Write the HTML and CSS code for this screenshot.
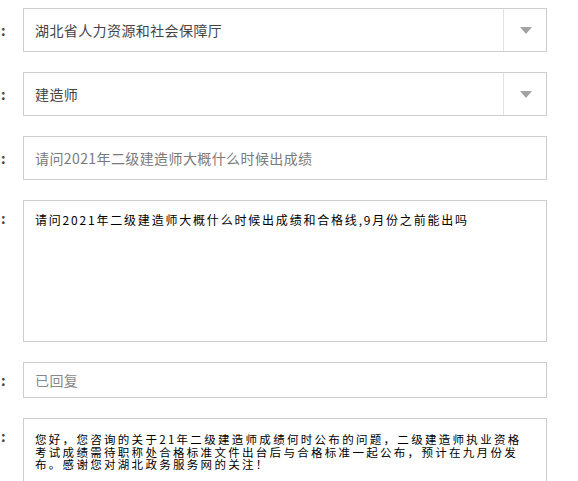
FILE: index.html
```html
<!DOCTYPE html>
<html lang="zh-CN">
<head>
<meta charset="utf-8">
<title>留言详情</title>
<link rel="stylesheet" href="styles.css">
</head>
<body>
<div class="form">
  <div class="row">
    <div class="label label-mid">:</div>
    <div class="field select">
      <div class="select-text">湖北省人力资源和社会保障厅</div>
      <div class="select-btn"><span class="arrow"></span></div>
    </div>
  </div>
  <div class="row">
    <div class="label label-mid">:</div>
    <div class="field select">
      <div class="select-text">建造师</div>
      <div class="select-btn"><span class="arrow"></span></div>
    </div>
  </div>
  <div class="row">
    <div class="label label-mid">:</div>
    <div class="field input">请问2021年二级建造师大概什么时候出成绩</div>
  </div>
  <div class="row">
    <div class="label label-top">:</div>
    <div class="field area area-tall">请问2021年二级建造师大概什么时候出成绩和合格线,9月份之前能出吗</div>
  </div>
  <div class="row">
    <div class="label label-short">:</div>
    <div class="field input input-short">已回复</div>
  </div>
  <div class="row">
    <div class="label label-top">:</div>
    <div class="field area area-reply">您好，您咨询的关于21年二级建造师成绩何时公布的问题，二级建造师执业资格考试成绩需待职称处合格标准文件出台后与合格标准一起公布，预计在九月份发布。感谢您对湖北政务服务网的关注！</div>
  </div>
</div>
</body>
</html>
```
FILE: styles.css
```css
html, body {
  margin: 0;
  padding: 0;
  background: #ffffff;
}
body {
  font-family: "Noto Sans CJK SC", "Noto Sans", sans-serif;
  overflow: hidden;
  height: 481px;
}
.form {
  display: flex;
  flex-direction: column;
  gap: 20px;
  padding-top: 8px;
}
.row {
  display: flex;
  align-items: flex-start;
}
.label {
  width: 23px;
  box-sizing: border-box;
  padding-left: 1px;
  font-size: 14px;
  color: #444;
  font-weight: bold;
}
.label-mid {
  line-height: 44px;
}
.label-short {
  line-height: 36px;
}
.label-top {
  padding-top: 11px;
  line-height: 14px;
}
.field {
  width: 524px;
  box-sizing: border-box;
  border: 1px solid #cdcdcd;
  background: #fff;
}
.select {
  height: 44px;
  display: flex;
}
.select-text {
  flex: 1;
  padding-left: 11px;
  line-height: 42px;
  font-size: 14px;
  letter-spacing: 0.4px;
  color: #444;
}
.select-btn {
  width: 42px;
  border-left: 1px solid #e2e2e2;
  display: flex;
  align-items: center;
  justify-content: center;
}
.arrow {
  width: 0;
  height: 0;
  border-left: 6px solid transparent;
  border-right: 6px solid transparent;
  border-top: 7px solid #a3a3a3;
  margin-left: 2px;
}
.input {
  height: 44px;
  padding-left: 11px;
  line-height: 42px;
  font-size: 14px;
  letter-spacing: 0.4px;
  color: #7a7a7a;
}
.input-short {
  height: 36px;
  line-height: 34px;
  color: #888;
}
.area {
  padding: 12px 21px 0 11px;
  font-size: 11.5px;
  line-height: 12.5px;
  letter-spacing: 2.3px;
  color: #000;
}
.area-tall {
  height: 142px;
  font-size: 12px;
  letter-spacing: 1.8px;
  padding-top: 13px;
}
.area-reply {
  height: 120px;
  padding-top: 14px;
}
```
